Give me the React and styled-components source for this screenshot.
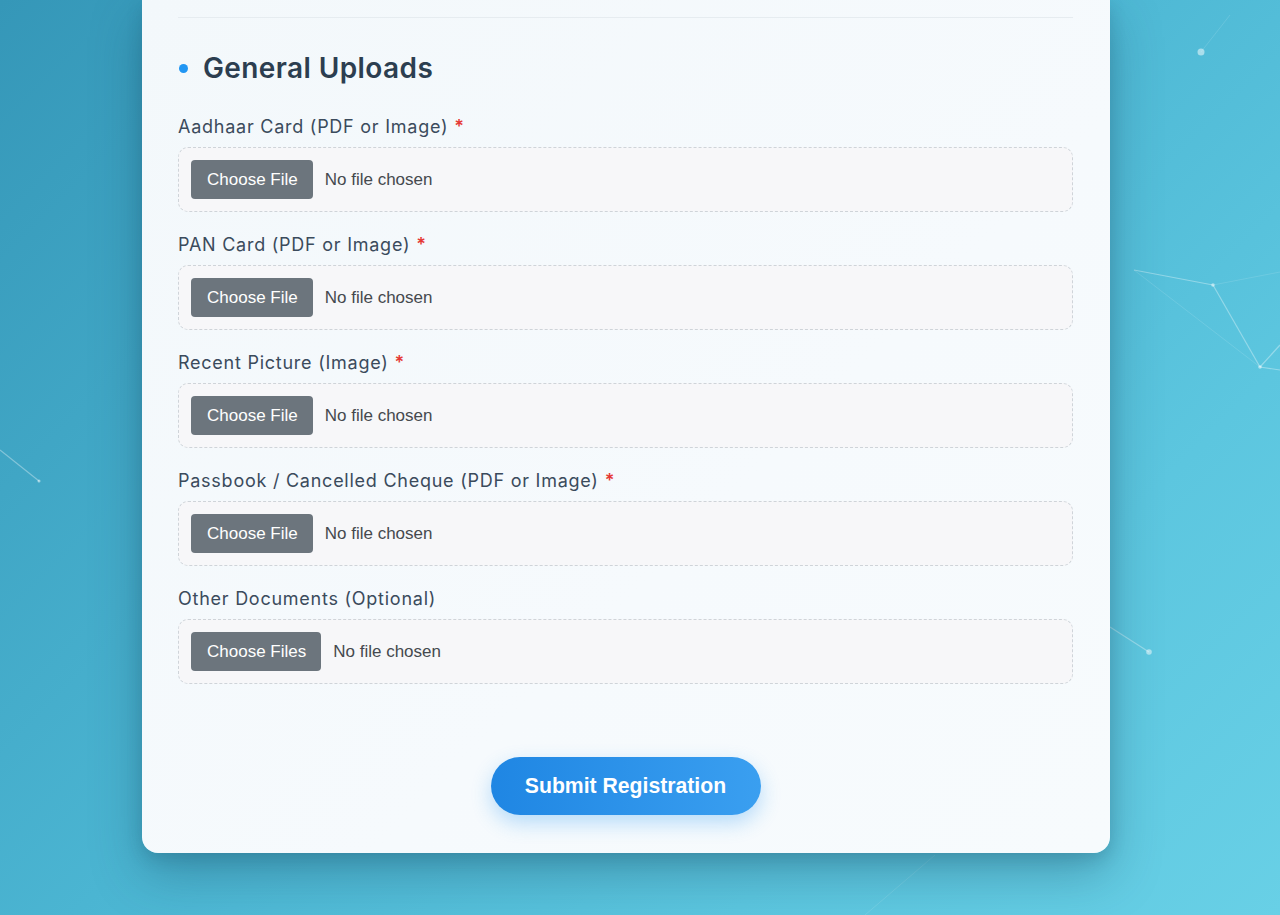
import React from "react";
import styled, { createGlobalStyle } from "styled-components";

const GlobalStyle = createGlobalStyle`
  html, body {
    margin: 0;
    padding: 0;
  }
  body {
    font-family: "Inter", "Liberation Sans", sans-serif;
    overflow: hidden;
  }
`;

const uploads = [
  { label: "Aadhaar Card (PDF or Image)", required: true },
  { label: "PAN Card (PDF or Image)", required: true },
  { label: "Recent Picture (Image)", required: true },
  { label: "Passbook / Cancelled Cheque (PDF or Image)", required: true },
  { label: "Other Documents (Optional)", multiple: true },
];

const Backdrop = () => (
  <BackdropSvg viewBox="0 0 1280 915" preserveAspectRatio="none">
    <g stroke="rgba(255,255,255,0.35)" strokeWidth="1.2" fill="none">
      <line x1="1134" y1="270" x2="1213" y2="285" />
      <line x1="1213" y1="285" x2="1260" y2="367" />
      <line x1="1260" y1="367" x2="1280" y2="370" />
      <line x1="1260" y1="367" x2="1280" y2="345" />
      <line x1="0" y1="450" x2="39" y2="481" />
      <line x1="1110" y1="627" x2="1149" y2="652" />
    </g>
    <g stroke="rgba(255,255,255,0.12)" strokeWidth="1" fill="none">
      <line x1="1213" y1="285" x2="1280" y2="272" />
      <line x1="1134" y1="270" x2="1260" y2="367" />
      <line x1="865" y1="915" x2="935" y2="855" />
      <line x1="1201" y1="52" x2="1230" y2="15" />
    </g>
    <g fill="rgba(255,255,255,0.5)">
      <circle cx="1201" cy="52" r="3.5" />
      <circle cx="1213" cy="285" r="1.8" />
      <circle cx="1260" cy="367" r="1.8" />
      <circle cx="39" cy="481" r="1.5" />
      <circle cx="1149" cy="652" r="2.8" />
    </g>
  </BackdropSvg>
);

const App = () => {
  return (
    <Page>
      <GlobalStyle />
      <Backdrop />
      <Card>
        <Divider />
        <SectionTitle>
          <Dot />
          General Uploads
        </SectionTitle>
        {uploads.map((item) => (
          <Field key={item.label}>
            <Label>
              {item.label}
              {item.required && <Required>*</Required>}
            </Label>
            <FileBox>
              <FileInput type="file" multiple={item.multiple} />
            </FileBox>
          </Field>
        ))}
        <SubmitRow>
          <SubmitButton type="button">Submit Registration</SubmitButton>
        </SubmitRow>
      </Card>
    </Page>
  );
};

export default App;

const Page = styled.div`
  position: relative;
  box-sizing: border-box;
  width: 1280px;
  height: 915px;
  padding: 0 170px 62px 142px;
  background: linear-gradient(135deg, #3597b8 0%, #4bb5d2 45%, #5cc6df 75%, #68d0e6 100%);
  overflow: hidden;
`;

const BackdropSvg = styled.svg`
  position: absolute;
  inset: 0;
  width: 100%;
  height: 100%;
  pointer-events: none;
`;

const Card = styled.div`
  position: relative;
  box-sizing: border-box;
  width: 968px;
  height: 853px;
  padding: 17px 37px 0 36px;
  background: linear-gradient(135deg, #f3f8fb 0%, #f6fafd 60%, #f7fbfd 100%);
  border-radius: 0 0 16px 16px;
  box-shadow: 0 20px 50px rgba(20, 70, 95, 0.35), 0 6px 16px rgba(20, 70, 95, 0.18);
`;

const Divider = styled.div`
  height: 1px;
  background: #e6ecf0;
`;

const SectionTitle = styled.h2`
  display: flex;
  align-items: center;
  gap: 15px;
  margin: 30px 0 25px;
  height: 40px;
  font-family: "Inter", "Noto Sans", sans-serif;
  font-size: 28px;
  font-weight: 600;
  color: #2c3e50;
  letter-spacing: 0.4px;
`;

const Dot = styled.span`
  width: 9px;
  height: 9px;
  margin-left: 1px;
  border-radius: 50%;
  background: #2196f3;
`;

const Field = styled.div`
  margin-bottom: 19px;
`;

const Label = styled.label`
  display: block;
  height: 27px;
  line-height: 27px;
  margin-bottom: 7px;
  font-family: "Inter", "Noto Sans", sans-serif;
  font-size: 18px;
  font-weight: 400;
  letter-spacing: 0.75px;
  color: #3b4b5c;
`;

const Required = styled.span`
  margin-left: 6px;
  color: #e53935;
  font-weight: 600;
`;

const FileBox = styled.div`
  box-sizing: border-box;
  height: 65px;
  display: flex;
  align-items: center;
  padding: 0 12px;
  background: #f7f7f9;
  border: 1px dashed #cfd4d9;
  border-radius: 10px;
`;

const FileInput = styled.input`
  font-family: "Liberation Sans", Arial, sans-serif;
  font-size: 17px;
  color: #45494e;

  &::file-selector-button {
    height: 39px;
    margin-right: 12px;
    padding: 0 15px 0 16px;
    border: none;
    border-radius: 4px;
    background: #6c757d;
    color: #ffffff;
    font-family: "Liberation Sans", Arial, sans-serif;
    font-size: 17px;
    cursor: pointer;
  }
`;

const SubmitRow = styled.div`
  display: flex;
  justify-content: center;
  margin-top: 73px;
`;

const SubmitButton = styled.button`
  width: 270px;
  height: 58px;
  border: none;
  border-radius: 29px;
  background: linear-gradient(90deg, #1f86e3 0%, #3a9ff0 100%);
  color: #ffffff;
  font-family: "Liberation Sans", Arial, sans-serif;
  font-size: 21.2px;
  font-weight: 700;
  box-shadow: 0 8px 20px rgba(33, 150, 243, 0.3);
  cursor: pointer;
`;
